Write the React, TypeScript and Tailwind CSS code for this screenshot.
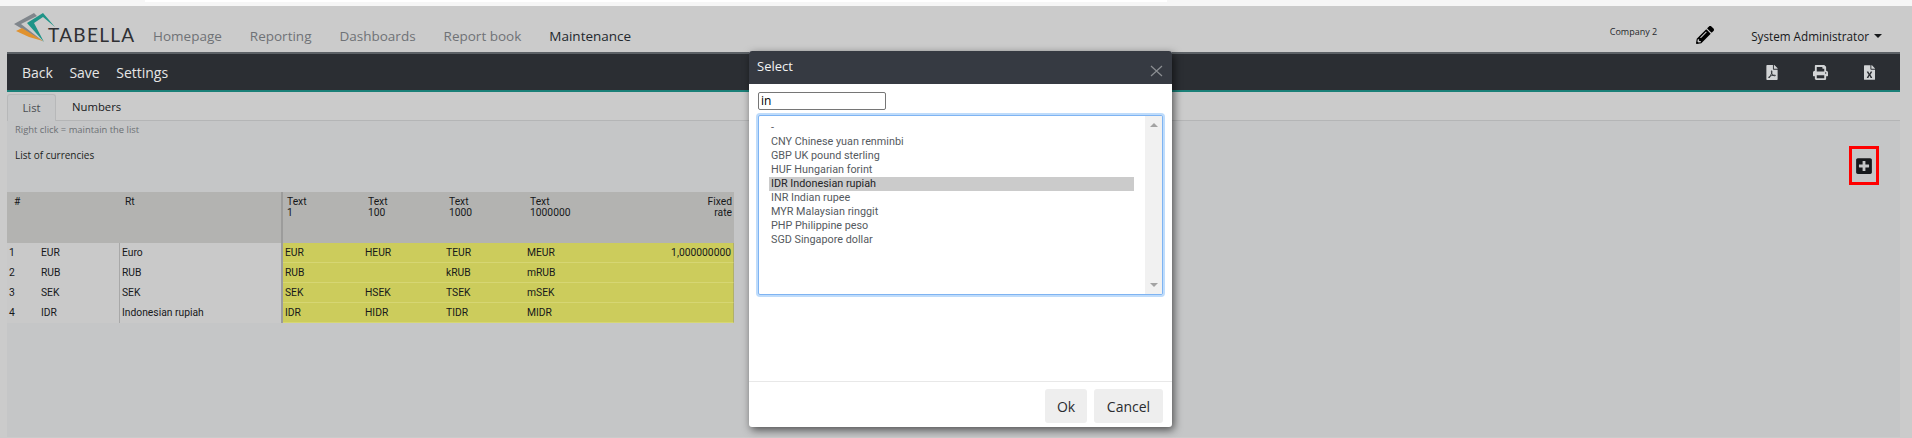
import { FaFileExcel, FaFilePdf, FaPencilAlt, FaPlusSquare, FaPrint } from 'react-icons/fa'

const menu = [
  { label: 'Homepage', active: false },
  { label: 'Reporting', active: false },
  { label: 'Dashboards', active: false },
  { label: 'Report book', active: false },
  { label: 'Maintenance', active: true },
]

const rows = [
  ['1', 'EUR', 'Euro', 'EUR', 'HEUR', 'TEUR', 'MEUR', '1,000000000'],
  ['2', 'RUB', 'RUB', 'RUB', '', 'kRUB', 'mRUB', ''],
  ['3', 'SEK', 'SEK', 'SEK', 'HSEK', 'TSEK', 'mSEK', ''],
  ['4', 'IDR', 'Indonesian rupiah', 'IDR', 'HIDR', 'TIDR', 'MIDR', ''],
]

const currencies = [
  '-',
  'CNY Chinese yuan renminbi',
  'GBP UK pound sterling',
  'HUF Hungarian forint',
  'IDR Indonesian rupiah',
  'INR Indian rupee',
  'MYR Malaysian ringgit',
  'PHP Philippine peso',
  'SGD Singapore dollar',
]

function Logo() {
  return (
    <div className="flex items-end w-[119px] h-[30px] relative">
      <svg width="44" height="30" viewBox="0 0 44 30" className="absolute left-0 top-0">
        <path d="M1 11 L21 0 L24 3 L8 11 L31 29 Z" fill="#80868c" />
        <path d="M14 10 L30 0 L42 14 L30 4 L21 10 L31 29 Z" fill="#1f9488" />
        <path d="M3 18 L9 15 L30 28 L16 24 Z" fill="#e0922f" />
      </svg>
      <span className="ml-[35px] text-[19px] leading-[16px] tracking-[1.3px] text-[#2f3033] font-['Lato']">TABELLA</span>
    </div>
  )
}

function Header() {
  return (
    <div className="h-[46px] flex items-start bg-[#cbcbcb]">
      <div className="ml-[13px] mt-[7px]">
        <Logo />
      </div>
      <nav className="flex gap-[28px] ml-[21px] mt-[20px] text-[13.5px] leading-[20px]">
        {menu.map((m) => (
          <span key={m.label} className={m.active ? 'text-[#23282d]' : 'text-[#6f7276]'}>
            {m.label}
          </span>
        ))}
      </nav>
      <div className="ml-auto flex items-start pr-[30px]">
        <span className="text-[9px] leading-[14px] mt-[19px] text-[#25282c]">Company 2</span>
        <FaPencilAlt className="ml-[39px] mt-[20px] w-[18px] h-[18px] text-black" />
        <span className="ml-[37px] mt-[21px] text-[11.7px] leading-[18px] text-[#17191b]">System Administrator</span>
        <span className="ml-[5px] mt-[28px] border-x-[4px] border-x-transparent border-t-[4px] border-t-[#17191b]" />
      </div>
    </div>
  )
}

function Toolbar() {
  return (
    <div className="h-[40px] ml-[7px] mr-[12px] flex items-center bg-[#2b2e33] border-t-2 border-t-[#5c6166] border-b-2 border-b-[#1a8078] text-[14px] text-[#e6e6e6]">
      <div className="flex gap-[16.5px] ml-[15px]">
        <span>Back</span>
        <span>Save</span>
        <span>Settings</span>
      </div>
      <div className="ml-auto flex items-center text-[#d2d4d6] mr-[25px]">
        <FaFilePdf className="w-[12px] h-[15px]" />
        <FaPrint className="ml-[35px] w-[15px] h-[15px]" />
        <FaFileExcel className="ml-[36px] w-[11px] h-[15px]" />
      </div>
    </div>
  )
}

function Tabs() {
  return (
    <div className="h-[29px] ml-[7px] mr-[12px] pt-[2px] flex border-b border-b-[#b4b5b6] text-[11.3px]">
      <div className="w-[49px] h-[27px] flex items-center justify-center rounded-t-[3px] border border-b-0 border-[#b7b8b9] bg-[#c6c7c8] text-[#4b4e52]">
        List
      </div>
      <div className="ml-[16px] h-[27px] flex items-center text-[#17191b]">Numbers</div>
    </div>
  )
}

function CurrencyTable() {
  const cols = 'grid grid-cols-[32px_80px_164px_81px_81px_81px_100px_108px]'
  return (
    <div className="w-[727px] font-['Roboto'] text-[10.3px] text-[#16181a]">
      <div className={`${cols} h-[51px] leading-[11px] bg-[#b3b3b1] pt-[4px]`}>
        <span className="pl-[7px]">#</span>
        <span />
        <span className="pl-[6px] -mt-[4px] pt-[4px] border-r-2 border-r-[#9c9c9b]">Rt</span>
        <span className="pl-[4px]">Text<br />1</span>
        <span className="pl-[4px]">Text<br />100</span>
        <span className="pl-[4px]">Text<br />1000</span>
        <span className="pl-[4px]">Text<br />1000000</span>
        <span className="pr-[2px] text-right col-start-8">Fixed<br />rate</span>
      </div>
      {rows.map((r) => (
        <div key={r[0]} className={`${cols} h-[20px] items-stretch leading-[19px] bg-[#c9c9c9]`}>
          <span className="pl-[2px]">{r[0]}</span>
          <span className="pl-[2px]">{r[1]}</span>
          <span className="pl-[2px] border-l border-l-[#a8a8a8] border-r-2 border-r-[#9c9c9b]">{r[2]}</span>
          <span className="pl-[2px] bg-[#cccc5c] border-b border-b-[#d6d673]">{r[3]}</span>
          <span className="pl-[1px] bg-[#cccc5c] border-b border-b-[#d6d673]">{r[4]}</span>
          <span className="pl-[1px] bg-[#cccc5c] border-b border-b-[#d6d673]">{r[5]}</span>
          <span className="pl-[1px] bg-[#cccc5c] border-b border-b-[#d6d673]">{r[6]}</span>
          <span className="pr-[2px] text-right bg-[#cccc5c] border-b border-b-[#d6d673] border-r border-r-[#b0b06a]">{r[7]}</span>
        </div>
      ))}
    </div>
  )
}

function SelectDialog() {
  return (
    <div className="absolute left-[749px] top-[51px] w-[423px] h-[376px] flex flex-col rounded-[3px] bg-white shadow-[2px_3px_8px_rgba(0,0,0,0.6)]">
      <div className="h-[33px] flex items-center justify-between rounded-t-[3px] bg-[#363a42] pl-[8px] pr-[9px] pb-[2px] text-[13px] text-[#f2f2f2]">
        <span>Select</span>
        <svg width="13" height="12" viewBox="0 0 13 12" className="mt-[8px] text-[#8b8e92]" fill="none" stroke="currentColor" strokeWidth="1.2">
          <path d="M1 1 L12 11 M12 1 L1 11" />
        </svg>
      </div>
      <div className="flex-1 px-[9px] pt-[8px]">
        <input
          readOnly
          value="in"
          className="block w-[128px] h-[18px] px-[2px] border border-[#767676] rounded-[2px] text-[12px] text-black font-['Open_Sans'] outline-none"
        />
        <div className="mt-[5px] w-[405px] h-[180px] flex rounded-[2px] border border-[#7fb4f2] shadow-[0_0_0_2px_#bfdcfb] bg-white overflow-hidden">
          <ul className="flex-1 pl-[10px] pt-[5px] font-['Roboto'] text-[10.8px] leading-[14px] text-[#555a60]">
            {currencies.map((c) => (
              <li key={c} className={c.startsWith('IDR') ? 'w-[365px] pl-[2px] bg-[#cbcbcb] text-[#222427]' : 'pl-[2px]'}>
                {c}
              </li>
            ))}
          </ul>
          <div className="w-[17px] flex flex-col items-center justify-between py-[7px] bg-[#f1f1f1]">
            <span className="border-x-[4px] border-x-transparent border-b-[4px] border-b-[#a3a3a3]" />
            <span className="border-x-[4px] border-x-transparent border-t-[4px] border-t-[#a3a3a3]" />
          </div>
        </div>
      </div>
      <div className="h-[46px] flex justify-end gap-[7px] pt-[7px] pr-[9px] border-t border-t-[#e8e8e8] text-[14px] text-[#2a2c30]">
        <button className="w-[42px] h-[34px] rounded-[3px] bg-[#eeeeee]">Ok</button>
        <button className="w-[69px] h-[34px] rounded-[3px] bg-[#eeeeee]">Cancel</button>
      </div>
    </div>
  )
}

export default function App() {
  return (
    <div className="relative w-[1912px] h-[438px] overflow-hidden bg-[#cbcbcb] font-['Open_Sans',sans-serif]">
      <div className="h-[6px] bg-[#f6f6f6]">
        <div className="ml-[145px] w-[1022px] h-[2px] bg-white" />
      </div>
      <Header />
      <Toolbar />
      <Tabs />
      <div className="relative h-[316px] ml-[7px] mr-[12px] bg-[#c5c6c7]">
        <div className="flex justify-between">
          <div className="pl-[8px] pt-[2px]">
            <p className="text-[9.4px] leading-[14px] text-[#6c7074]">Right click = maintain the list</p>
            <p className="mt-[11px] text-[10px] leading-[14px] text-[#1c1e20]">List of currencies</p>
          </div>
          <div className="mr-[21px] mt-[25px] w-[30px] h-[39px] flex items-center justify-center border-[3px] border-[#ff0000]">
            <FaPlusSquare className="w-[16px] h-[18px] text-[#17191c]" />
          </div>
        </div>
        <div className="mt-[7px]">
          <CurrencyTable />
        </div>
      </div>
      <SelectDialog />
    </div>
  )
}
